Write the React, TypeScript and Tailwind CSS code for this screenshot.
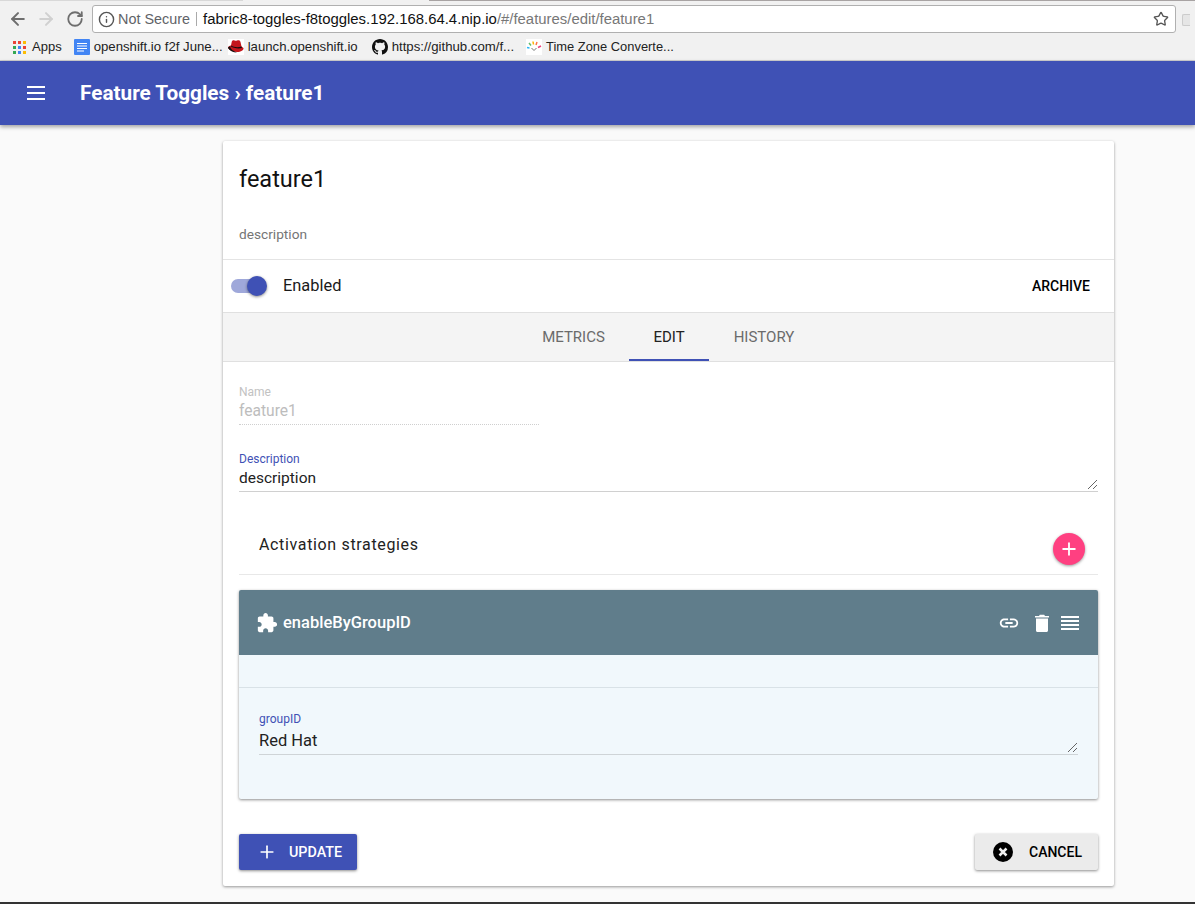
import { ArrowLeft, ArrowRight, Info, Plus, RotateCw, Star } from "lucide-react";

const FONT = "font-['Roboto','Liberation_Sans',sans-serif]";
const CHROME_FONT = "font-['Liberation_Sans','Arial',sans-serif]";

function AppsIcon() {
  const colors = ["#ea4335", "#ea4335", "#fbbc05", "#34a853", "#4285f4", "#ea4335", "#34a853", "#4285f4", "#fbbc05"];
  return (
    <span className="grid h-[13px] w-[13px] grid-cols-3 gap-[2px]">
      {colors.map((c, i) => (
        <span key={i} className="h-[3px] w-[3px]" style={{ backgroundColor: c }} />
      ))}
    </span>
  );
}

function DocIcon() {
  return (
    <svg width="16" height="16" viewBox="0 0 16 16">
      <rect width="16" height="16" rx="1" fill="#4285f4" />
      <path d="M3 4h10v1H3zM3 6.500h10v1H3zM3 9h10v1H3zM3 11.500h7v1H3z" fill="#fff" />
    </svg>
  );
}

function RedHatIcon() {
  return (
    <svg width="16" height="16" viewBox="0 0 16 16">
      <rect width="16" height="16" fill="#fff" />
      <path d="M0 9c1.500 2.500 5 4 9 4 4 0 7-2 6.500-4L13.500 7.500 12.500 3C12 1 10.500 1 9 1.600 8 2 7.500 1.800 6.500 1.400 5 1 4 1.500 3.700 3L3 6.500C1.500 6.700 0 7.500 0 9z" fill="#c4161c" />
      <path d="M3 6.500c2.500 1.800 7 2.300 10.500 1l.5 1.500C10.500 10 5.500 9.200 2.700 7.300z" fill="#111" />
      <path d="M0 9c1.500 2.500 5 4.500 9 4.500-4-1.500-6.500-3.500-7-6C.8 7.800 0 8.200 0 9z" fill="#111" />
    </svg>
  );
}

function GithubIcon() {
  return (
    <svg width="16" height="16" viewBox="0 0 16 16" fill="#111">
      <path d="M8 0C3.580 0 0 3.580 0 8c0 3.540 2.290 6.530 5.470 7.590.4.070.55-.17.55-.38 0-.19-.01-.82-.01-1.490-2.010.370-2.530-.49-2.690-.94-.09-.23-.48-.94-.82-1.130-.28-.15-.68-.52-.01-.53.630-.01 1.080.58 1.230.82.720 1.210 1.870.870 2.330.660.070-.52.280-.87.510-1.070-1.780-.2-3.640-.89-3.640-3.950 0-.87.310-1.590.820-2.150-.08-.2-.36-1.020.08-2.120 0 0 .67-.21 2.200.820.640-.18 1.320-.27 2-.27s1.360.09 2 .27c1.530-1.040 2.200-.82 2.200-.82.440 1.100.160 1.920.080 2.120.510.560.820 1.270.820 2.150 0 3.070-1.870 3.750-3.650 3.950.290.250.540.730.540 1.480 0 1.070-.01 1.930-.01 2.200 0 .210.150.460.550.380A8.013 8.013 0 0 0 16 8c0-4.420-3.580-8-8-8z" />
    </svg>
  );
}

function TimeZoneIcon() {
  return (
    <svg width="16" height="16" viewBox="0 0 16 16" fill="none" strokeWidth="1.500">
      <rect width="16" height="16" fill="#fff" stroke="none" />
      <path d="M1 8.500l2.500.5" stroke="#29b6f6" />
      <path d="M3 4l2 2.500" stroke="#66bb6a" />
      <path d="M7 2.500l.5 3" stroke="#ffb300" />
      <path d="M11 3l-1 3" stroke="#ff7043" />
      <path d="M15 7l-3 1.500" stroke="#ec407a" />
      <path d="M5.500 9l2.500 2.500L10.500 9" stroke="#777" strokeWidth="1" />
    </svg>
  );
}

function Bookmark({
  icon,
  label,
  className,
  textClassName = "text-[13.2px]",
}: {
  icon: React.ReactNode;
  label: string;
  className: string;
  textClassName?: string;
}) {
  return (
    <div className={`flex items-center gap-[4px] ${className}`}>
      {icon}
      <span className={`whitespace-nowrap text-[#222] ${textClassName}`}>{label}</span>
    </div>
  );
}

function BrowserChrome() {
  return (
    <div className={`bg-[#f1f1f1] ${CHROME_FONT}`}>
      <div className="flex h-[1px]">
        <div className="w-[243px] bg-[#d8d8d8]" />
        <div className="w-[186px] bg-[#f1f1f1]" />
        <div className="flex-1 bg-[#a8a3a3]" />
      </div>
      <div className="flex h-[32px] items-center pt-[4px]">
        <div className="flex w-[92px] items-center pl-[8px]">
          <ArrowLeft size={20} strokeWidth={2.4} className="text-[#6e6e6e]" />
          <ArrowRight size={20} strokeWidth={2.4} className="ml-[8px] text-[#d0d0d0]" />
          <RotateCw size={18} strokeWidth={2.4} className="ml-[10px] text-[#6e6e6e]" />
        </div>
        <div className="flex h-[28px] w-[1084px] items-center rounded-[3px] border border-[#b0b0b0] bg-white pl-[5px] pr-[6px]">
          <Info size={17} className="text-[#555]" />
          <span className="ml-[3px] pt-[1px] text-[14.400px] text-[#5f6368]">Not Secure</span>
          <span className="ml-[6px] h-[14px] w-[1px] bg-[#aaa]" />
          <span className="ml-[6px] whitespace-nowrap text-[14.900px] text-[#111]">
            fabric8-toggles-f8toggles.192.168.64.4.nip.io
            <span className="text-[#777]">/#/features/edit/feature1</span>
          </span>
          <Star size={16} strokeWidth={2} className="ml-auto text-[#555]" />
        </div>
        <div className="ml-[6px] mt-[1px] h-[12px] w-[8px] rounded-l-[2px] border border-r-0 border-[#ccc] bg-[#e6e6e6]" />
      </div>
      <div className="flex h-[28px] items-center border-b border-[#cfcfcf] pt-[1px]">
        <Bookmark icon={<AppsIcon />} label="Apps" className="ml-[13px] gap-[6px]" textClassName="text-[13px]" />
        <Bookmark icon={<DocIcon />} label="openshift.io f2f June..." className="ml-[12px]" />
        <Bookmark icon={<RedHatIcon />} label="launch.openshift.io" className="ml-[5px]" />
        <Bookmark icon={<GithubIcon />} label="https://github.com/f..." className="ml-[14px]" />
        <Bookmark icon={<TimeZoneIcon />} label="Time Zone Converte..." className="ml-[12px]" textClassName="text-[12.900px]" />
      </div>
    </div>
  );
}

function HeaderBar() {
  return (
    <header className={`relative z-10 flex h-[64px] shrink-0 items-center bg-[#3f51b5] pl-[27px] shadow-[0_2px_4px_rgba(0,0,0,0.35)] ${FONT}`}>
      <div className="flex w-[18px] flex-col gap-[4px]">
        <span className="h-[2px] bg-white" />
        <span className="h-[2px] bg-white" />
        <span className="h-[2px] bg-white" />
      </div>
      <h1 className="ml-[35px] pt-[2px] text-[20.750px] font-bold text-white">Feature Toggles › feature1</h1>
    </header>
  );
}

function Tab({ label, active, className }: { label: string; active?: boolean; className: string }) {
  return (
    <div
      className={`flex h-full items-center justify-center border-b-2 pt-[3px] text-[15px] ${className} ${
        active ? "border-[#3f51b5] text-[#222]" : "border-transparent text-[#6b6b6b]"
      }`}
    >
      {label}
    </div>
  );
}

function ResizeGrip() {
  return (
    <svg width="9" height="9" viewBox="0 0 9 9" className="absolute bottom-[2px] right-[1px]" stroke="#666" strokeWidth="1">
      <path d="M0 9L9 0M5 9l4-4" />
    </svg>
  );
}

function StrategyCard() {
  return (
    <div className="mt-[15px] rounded-[2px] bg-[#f1f8fc] shadow-[0_1px_3px_rgba(0,0,0,0.45)]">
      <div className="flex h-[65px] items-center rounded-t-[2px] bg-[#607d8b] pl-[17px] pr-[19px] text-white">
        <svg width="22" height="22" viewBox="0 0 24 24" fill="#fff">
          <path d="M20.500 11H19V7c0-1.100-.9-2-2-2h-4V3.500C13 2.120 11.880 1 10.500 1S8 2.120 8 3.500V5H4c-1.100 0-1.990.9-1.990 2v3.800H3.500c1.490 0 2.700 1.210 2.700 2.700s-1.210 2.700-2.700 2.700H2V20c0 1.100.9 2 2 2h3.800v-1.500c0-1.490 1.210-2.700 2.700-2.700 1.490 0 2.700 1.210 2.700 2.700V22H17c1.100 0 2-.9 2-2v-4h1.500c1.380 0 2.500-1.120 2.500-2.500S21.880 11 20.500 11z" />
        </svg>
        <span className="ml-[5px] pt-[1px] text-[16.500px] font-medium">enableByGroupID</span>
        <div className="ml-auto flex items-center">
          <svg width="22" height="22" viewBox="0 0 24 24" fill="#fff">
            <path d="M3.900 12c0-1.710 1.390-3.100 3.100-3.100h4V7H7c-2.760 0-5 2.240-5 5s2.240 5 5 5h4v-1.900H7c-1.710 0-3.100-1.390-3.100-3.100zM8 13h8v-2H8v2zm9-6h-4v1.900h4c1.710 0 3.100 1.390 3.100 3.100s-1.390 3.100-3.100 3.100h-4V17h4c2.760 0 5-2.240 5-5s-2.240-5-5-5z" />
          </svg>
          <svg width="14" height="18" viewBox="0 0 14 18" fill="#fff" className="ml-[15px]">
            <path d="M1 4.500h12V16.500c0 .8-.7 1.500-1.500 1.500h-9C1.700 18 1 17.300 1 16.500zM0 2h4l.8-1.200h4.400L10 2h4v1.500H0z" />
          </svg>
          <div className="ml-[12px] flex w-[18px] flex-col gap-[2px]">
            <span className="h-[2px] bg-white" />
            <span className="h-[2px] bg-white" />
            <span className="h-[2px] bg-white" />
            <span className="h-[2px] bg-white" />
          </div>
        </div>
      </div>
      <div className="h-[33px] border-b border-[#d9e2e7]" />
      <div className="px-[20px] pb-[44px] pt-[24px]">
        <label className="block text-[12px] leading-[14px] text-[#3f51b5]">groupID</label>
        <div className="relative h-[29px] border-b border-[#cfd4d7] pt-[5px] text-[16.500px] leading-[20px] text-[#222]">
          Red Hat
          <ResizeGrip />
        </div>
      </div>
    </div>
  );
}

function ActionButtons() {
  return (
    <div className="mt-[35px] flex items-start justify-between">
      <button className="flex h-[36px] w-[118px] items-center rounded-[2px] bg-[#3f51b5] pl-[19px] text-[14.300px] font-medium text-white shadow-[0_1px_3px_rgba(0,0,0,0.45)]">
        <Plus size={20} strokeWidth={2} className="-ml-[1px]" />
        <span className="ml-[12px] pt-[1px]">UPDATE</span>
      </button>
      <button className="flex h-[36px] w-[123px] items-center rounded-[2px] bg-[#ebebeb] pl-[18px] text-[14px] font-medium text-black shadow-[0_1px_3px_rgba(0,0,0,0.45)]">
        <svg width="20" height="20" viewBox="0 0 20 20">
          <circle cx="10" cy="10" r="10" fill="#000" />
          <path d="M6.500 6.500l7 7M13.500 6.500l-7 7" stroke="#f0f0f0" strokeWidth="2.500" />
        </svg>
        <span className="ml-[16px]">CANCEL</span>
      </button>
    </div>
  );
}

function FeatureCard() {
  return (
    <main className="ml-[223px] mt-[16px] h-[745px] w-[891px] rounded-[2px] bg-white shadow-[0_1px_3px_rgba(0,0,0,0.4)]">
      <section className="h-[119px] border-b border-[#e4e4e4] px-[16px] pt-[22px]">
        <h2 className="text-[23.500px] leading-[32px] text-[#111]">feature1</h2>
        <p className="mt-[29px] text-[13.700px] leading-[20px] text-[#757575]">description</p>
      </section>
      <section className="flex h-[53px] items-center border-b border-[#e0e0e0] pl-[8px] pr-[24px]">
        <div className="relative h-[20px] w-[36px]">
          <div className="absolute left-0 top-[3px] h-[14px] w-[32px] rounded-full bg-[#9fa8da]" />
          <div className="absolute right-0 top-0 h-[20px] w-[20px] rounded-full bg-[#3f51b5] shadow-[0_1px_3px_rgba(0,0,0,0.45)]" />
        </div>
        <span className="ml-[16px] text-[16.400px] text-[#1a1a1a]">Enabled</span>
        <span className="ml-auto text-[14px] font-medium text-black">ARCHIVE</span>
      </section>
      <nav className="flex h-[49px] items-stretch justify-center border-b border-[#e0e0e0] bg-[#f4f4f4]">
        <Tab label="METRICS" className="w-[111px]" />
        <Tab label="EDIT" active className="w-[80px]" />
        <Tab label="HISTORY" className="w-[110px]" />
      </nav>
      <form className="px-[16px] pt-[23px]">
        <label className="block text-[12px] leading-[14px] text-[#c2c2c2]">Name</label>
        <div className="h-[26px] w-[300px] border-b border-dotted border-[#cfcfcf] pt-[2px] text-[15.600px] leading-[20px] text-[#bdbdbd]">
          feature1
        </div>
        <label className="mt-[27px] block text-[12px] leading-[14px] text-[#3f51b5]">Description</label>
        <div className="relative h-[26px] border-b border-[#d0d0d0] pt-[2px] text-[15.500px] leading-[20px] text-[#222]">
          description
          <ResizeGrip />
        </div>
        <div className="mt-[26px] flex h-[57px] items-start justify-between border-b border-[#e8e8e8] pl-[20px] pr-[13px]">
          <h3 className="mt-[15px] text-[16px] tracking-[0.65px] text-[#222]">Activation strategies</h3>
          <button
            type="button"
            className="mt-[15px] flex h-[32px] w-[32px] items-center justify-center rounded-full bg-[#ff4081] text-white shadow-[0_1px_3px_rgba(0,0,0,0.4)]"
          >
            <Plus size={20} strokeWidth={2.2} />
          </button>
        </div>
        <StrategyCard />
        <ActionButtons />
      </form>
    </main>
  );
}

export default function App() {
  return (
    <div className={`flex h-[904px] flex-col overflow-hidden bg-[#fafafa] ${FONT}`}>
      <BrowserChrome />
      <HeaderBar />
      <div className="flex-1">
        <FeatureCard />
      </div>
      <div className="h-[2px] shrink-0 bg-[#333]" />
    </div>
  );
}
